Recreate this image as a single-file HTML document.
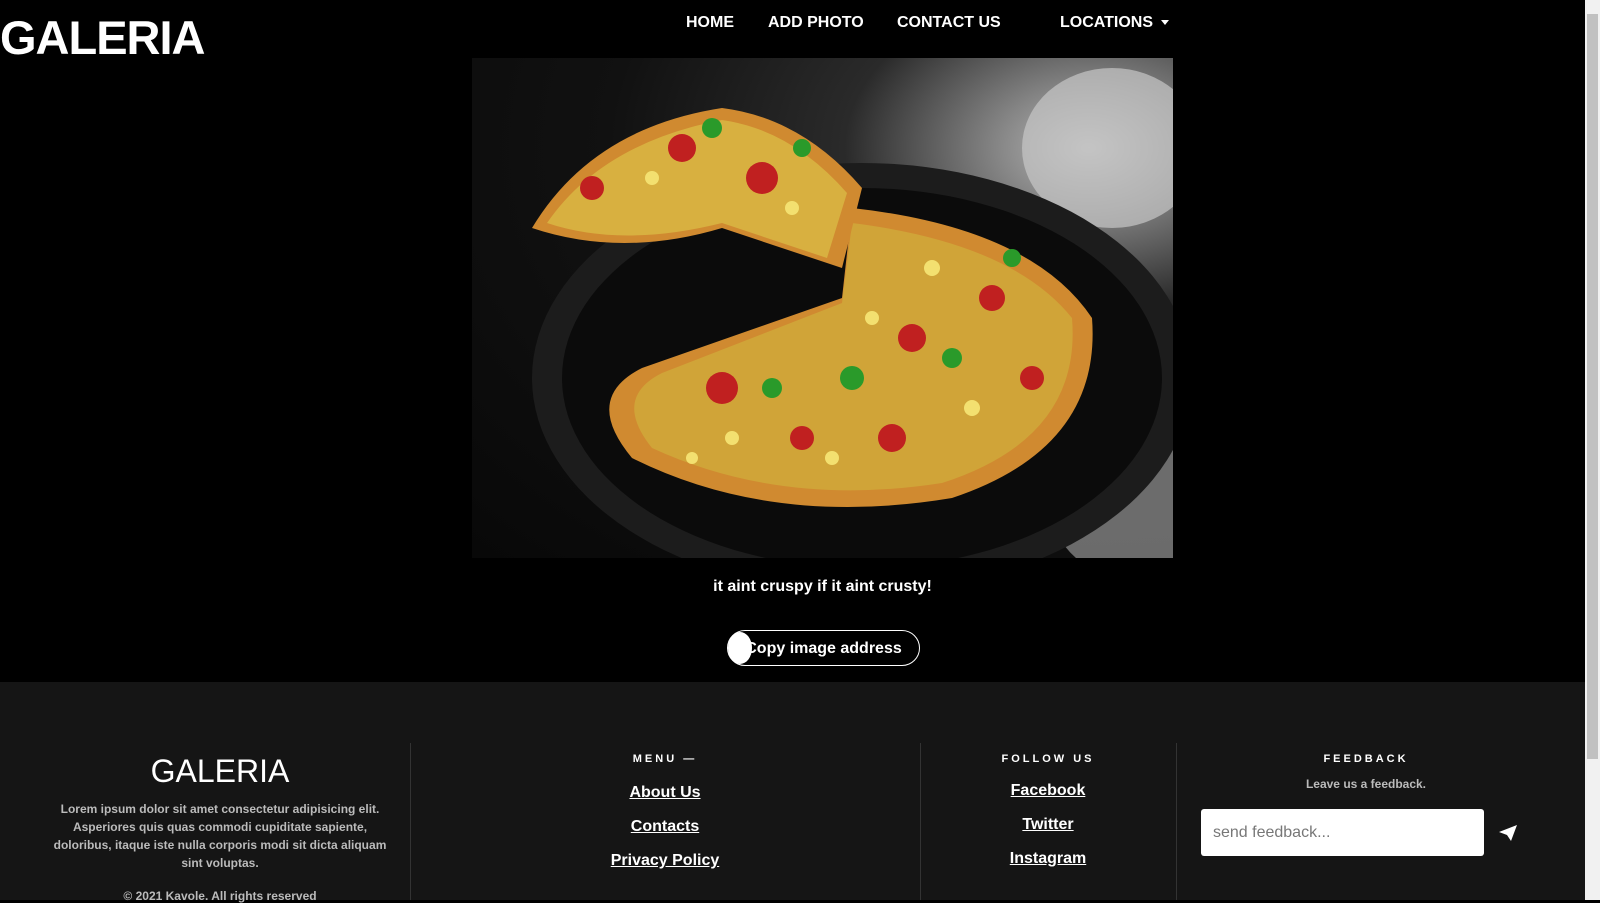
<!DOCTYPE html>
<html><head><meta charset="utf-8"><style>
*{margin:0;padding:0;box-sizing:border-box}
body{width:1600px;height:900px;overflow:hidden;background:#000;font-family:"Liberation Sans",sans-serif;color:#fff;position:relative}
.abs{position:absolute}
.logo{left:0;top:10px;font-size:47px;font-weight:bold;letter-spacing:-1px}
.nav{top:14px;font-size:16px;font-weight:bold}
.img{left:472px;top:58px;width:701px;height:500px;overflow:hidden;background:radial-gradient(ellipse at 88% 18%,#bbb 0,#888 10%,#2a2a2a 28%,#111 55%,#080808 100%)}
.cap{left:472px;width:701px;top:578px;text-align:center;font-weight:bold;font-size:16px}
.btn{left:727px;top:630px;width:193px;height:36px;border:1px solid #fff;border-radius:18px;text-align:center;line-height:35px;font-weight:bold;font-size:16px}
.foot{left:0;top:682px;width:1585px;height:218px;background:#151515}
.div{top:743px;width:1px;height:157px;background:#333}
.c{text-align:center}
.h{font-size:11px;letter-spacing:3px;font-weight:bold}
.l{font-size:16px;font-weight:bold;text-decoration:underline}
.sb{left:1585px;top:0;width:15px;height:900px;background:#f1f1f1}
</style></head><body>
<div class="abs logo">GALERIA</div>
<div class="abs nav" style="left:686px">HOME</div>
<div class="abs nav" style="left:768px">ADD PHOTO</div>
<div class="abs nav" style="left:897px">CONTACT US</div>
<div class="abs nav" style="left:1060px">LOCATIONS <span style="display:inline-block;border-top:5px solid #fff;border-left:4px solid transparent;border-right:4px solid transparent;vertical-align:middle;margin-left:4px"></span></div>
<div class="abs img">
<svg width="701" height="500" viewBox="0 0 701 500">
<ellipse cx="640" cy="90" rx="90" ry="80" fill="#c8c8c8" opacity=".7"/>
<ellipse cx="660" cy="450" rx="80" ry="70" fill="#aaa" opacity=".6"/>
<ellipse cx="390" cy="320" rx="330" ry="215" fill="#1c1c1c"/>
<ellipse cx="390" cy="320" rx="300" ry="190" fill="#0b0b0b"/>
<path d="M380 150 Q560 170 620 260 Q630 390 480 440 Q300 470 160 400 Q110 340 170 310 L370 240 Z" fill="#d08a30"/>
<path d="M380 165 Q540 185 600 260 Q610 380 470 425 Q310 450 180 390 Q140 340 190 315 L370 245 Z" fill="#d0a438"/>
<path d="M60 170 Q120 70 250 50 Q330 60 390 130 L370 210 L250 170 Q150 200 60 170Z" fill="#d08a30"/>
<path d="M75 165 Q130 85 250 62 Q320 72 375 135 L355 200 L250 165 Q150 190 75 165Z" fill="#d8b040"/>
<g fill="#c02020"><circle cx="210" cy="90" r="14"/><circle cx="290" cy="120" r="16"/><circle cx="440" cy="280" r="14"/><circle cx="250" cy="330" r="16"/><circle cx="520" cy="240" r="13"/><circle cx="420" cy="380" r="14"/><circle cx="120" cy="130" r="12"/><circle cx="560" cy="320" r="12"/><circle cx="330" cy="380" r="12"/></g>
<g fill="#2a9a2a"><circle cx="240" cy="70" r="10"/><circle cx="330" cy="90" r="9"/><circle cx="380" cy="320" r="12"/><circle cx="480" cy="300" r="10"/><circle cx="300" cy="330" r="10"/><circle cx="540" cy="200" r="9"/></g>
<g fill="#f3e070"><circle cx="180" cy="120" r="7"/><circle cx="320" cy="150" r="7"/><circle cx="460" cy="210" r="8"/><circle cx="360" cy="400" r="7"/><circle cx="500" cy="350" r="8"/><circle cx="260" cy="380" r="7"/><circle cx="400" cy="260" r="7"/><circle cx="220" cy="400" r="6"/></g>
</svg></div>
<div class="abs cap">it aint cruspy if it aint crusty!</div>
<div class="abs btn">Copy image address</div>
<div class="abs" style="left:728px;top:632px;width:24px;height:32px;border-radius:50%;background:#fff"></div>
<div class="abs foot"></div>
<div class="abs div" style="left:410px"></div>
<div class="abs div" style="left:920px"></div>
<div class="abs div" style="left:1176px"></div>
<div class="abs c" style="left:40px;width:360px;top:753px;font-size:32px">GALERIA</div>
<div class="abs c" style="left:50px;width:340px;top:800px;font-size:12px;line-height:18px;color:#bbb;font-weight:bold">Lorem ipsum dolor sit amet consectetur adipisicing elit. Asperiores quis quas commodi cupiditate sapiente, doloribus, itaque iste nulla corporis modi sit dicta aliquam sint voluptas.</div>
<div class="abs c" style="left:40px;width:360px;top:889px;font-size:12px;color:#bbb;font-weight:bold">© 2021 Kavole. All rights reserved</div>
<div class="abs c h" style="left:565px;width:200px;top:753px">MENU —</div>
<div class="abs c l" style="left:565px;width:200px;top:784px">About Us</div>
<div class="abs c l" style="left:565px;width:200px;top:818px">Contacts</div>
<div class="abs c l" style="left:565px;width:200px;top:852px">Privacy Policy</div>
<div class="abs c h" style="left:948px;width:200px;top:753px">FOLLOW US</div>
<div class="abs c l" style="left:948px;width:200px;top:782px">Facebook</div>
<div class="abs c l" style="left:948px;width:200px;top:816px">Twitter</div>
<div class="abs c l" style="left:948px;width:200px;top:850px">Instagram</div>
<div class="abs c h" style="left:1266px;width:200px;top:753px">FEEDBACK</div>
<div class="abs c" style="left:1266px;width:200px;top:777px;font-size:12px;color:#bbb;font-weight:bold">Leave us a feedback.</div>
<div class="abs" style="left:1201px;top:809px;width:283px;height:47px;background:#fff;border-radius:3px;color:#777;font-size:16px;padding:15px 12px">send feedback...</div>
<svg class="abs" style="left:1499px;top:825px" width="18" height="16" viewBox="0 0 18 16"><path d="M0 7 L18 0 L12 16 L8 10 Z" fill="#fff"/></svg>
<div class="abs sb"><div style="position:absolute;left:2px;top:14px;width:11px;height:745px;background:#c1c1c1"></div></div>
</body></html>
